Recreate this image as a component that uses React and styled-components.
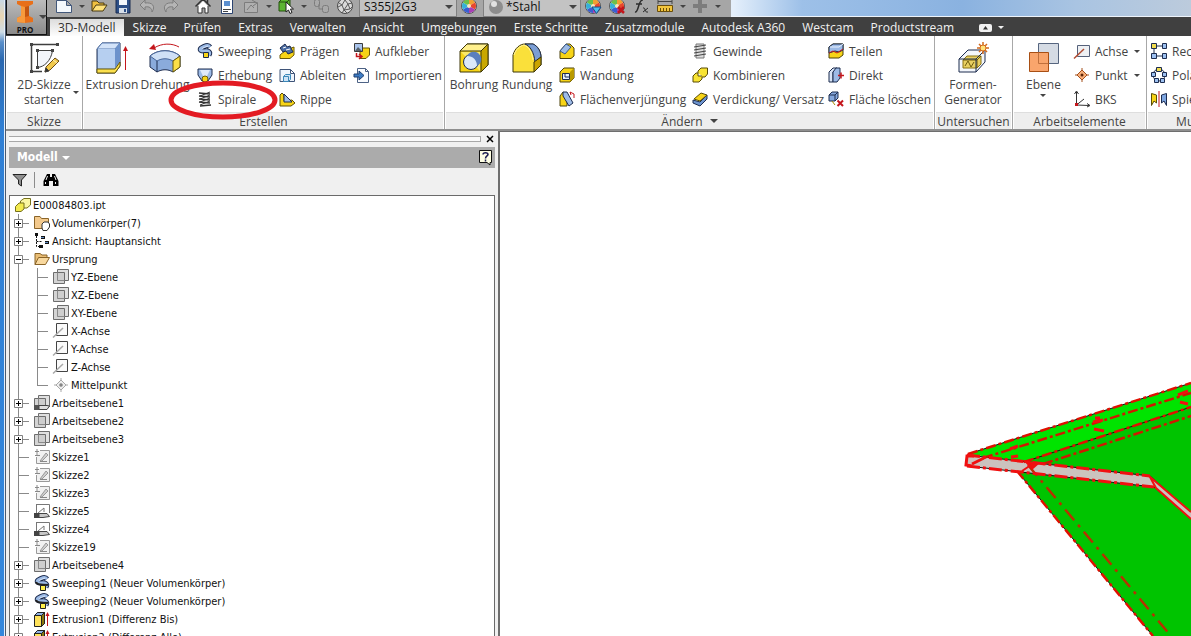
import React from 'react';
import styled, { createGlobalStyle } from 'styled-components';

const GlobalStyle = createGlobalStyle`
    * { box-sizing: border-box; }
    body { margin: 0; overflow: hidden; }
    button, select {
        margin: 0;
        padding: 0;
        border: 0;
        background: none;
        color: inherit;
        font: inherit;
    }
    ul { margin: 0; padding: 0; list-style: none; }
    svg { display: block; flex: none; }
`;

/* ---------- icons ---------- */

const N = '#1d2c4f';
const Y = '#f7d417';
const B = '#9dbbe6';
const R = '#c4161c';

const pipe = 'M13 4 C11 1 7 3 4 5 C2 7 4 8 7 8 C11 7 14 9 12 12';

const sweepPath = (
    <g strokeLinejoin='round'>
        <path d={pipe} fill='none' stroke={N} strokeWidth='5' />
        <path d={pipe} fill='none' stroke={B} strokeWidth='3' />
        <path d='M5 6 C5 5 9 4 11 3' fill='none' stroke='#e2edfb' />
        <path d='M6.500 9.500 H11.500 V14.500 H6.500 Z' fill={Y} stroke={N} />
    </g>
);

const planes = (
    <g stroke='#6d6d6d'>
        <path d='M4.500 .5 H15.500 V11.500 H4.500 Z' fill='#e0e0e0' />
        <path d='M.5 3.500 H11.500 V14.500 H.5 Z' fill='#c9c9c9' fillOpacity='.8' />
        <path d='M4.500 3.500 V11.500 H11.500' fill='none' stroke='#8a8a8a' />
    </g>
);

const wheel = (
    <g>
        <circle cx='8' cy='8' r='7.5' fill='#eee' stroke='#555' />
        <path d='M8 8 L8 1 A7 7 0 0 1 14 4.5 Z' fill='#f0a030' />
        <path d='M8 8 L14 4.5 A7 7 0 0 1 14 11.5 Z' fill='#e8482c' />
        <path d='M8 8 L14 11.5 A7 7 0 0 1 8 15 Z' fill='#a83fb5' />
        <path d='M8 8 L8 15 A7 7 0 0 1 2 11.5 Z' fill='#3a5fd0' />
        <path d='M8 8 L2 11.5 A7 7 0 0 1 2 4.5 Z' fill='#35b0d8' />
        <path d='M8 8 L2 4.5 A7 7 0 0 1 8 1 Z' fill='#6cc04a' />
        <circle cx='8' cy='8' r='2' fill='#f7e9c0' />
    </g>
);

const icons = {
    newFile: <path d='M.5 2.5 H10.5 L15.5 7.5 V14.5 H.5 Z M10.5 2.5 V7.5 H15.5' fill='#f4f8fc' stroke='#41577a' />,
    open: (
        <g strokeLinejoin='round'>
            <path d='M1 13 V3 H6 L8 5 H13 V8' fill='#f0c040' stroke='#4a3a10' />
            <path d='M1 13 L5 7 H16 L12 13 Z' fill='#ffe27a' stroke='#4a3a10' />
        </g>
    ),
    save: (
        <g>
            <path d='M1 1 H15 V15 H1 Z' fill='#2d4f86' stroke='#1a2c50' />
            <path d='M4 0 H12 V7 H4 Z' fill='#f3f6fa' />
            <path d='M4 10 H12 V15 H4 Z' fill='#d7dfea' />
            <path d='M9 11 H11 V14 H9 Z' fill='#2d4f86' />
        </g>
    ),
    undo: <path d='M6 2 L1 7 L6 12 V9 C10 8 13 10 13 14 C17 8 13 4 6 5 Z' fill='#b5b5b5' stroke='#7d7d7d' />,
    redo: <path d='M10 2 L15 7 L10 12 V9 C6 8 3 10 3 14 C-1 8 3 4 10 5 Z' fill='#b5b5b5' stroke='#7d7d7d' />,
    home: (
        <g>
            <path d='M3 8 V15 H7 V10 H10 V15 H13 V8' fill='#fff' stroke='#333' />
            <path d='M3 8 L8 3 L13 8 Z' fill='#fff' />
            <path d='M.5 8.5 L8 1 L15.5 8.5 M12.500 5 V1' fill='none' stroke='#333' strokeWidth='1.500' />
        </g>
    ),
    doc: (
        <g>
            <path d='M2.5 .5 H13.5 V15.5 H2.5 Z' fill='#fff' stroke='#2c4470' />
            <path d='M5 3 H11 V8 H5 Z' fill='#5b8fd0' />
            <path d='M4 11.5 H12 M4 13.5 H9' stroke='#444' />
        </g>
    ),
    update: (
        <g fill='#b0b0b0' stroke='#7c7c7c'>
            <path d='M1.5 4.5 H14.5 V14.5 H1.5 Z' />
            <path d='M4 12 L8 7 L11 10 M9 2 L14 5 L10 8' fill='none' />
        </g>
    ),
    select: (
        <g>
            <path d='M1 4 L4 1 H12 V10 L9 13 H1 Z' fill='#5cb531' stroke='#24520f' />
            <path d='M1 4 H9 V13 M9 4 L12 1' fill='none' stroke='#24520f' />
            <path d='M8 4 V14 L10.500 12 L12 15.500 L14 14.500 L12.500 11 H15.500 Z' fill='#fff' stroke='#222' />
        </g>
    ),
    chain: (
        <g fill='#a9a9a9' stroke='#7b7b7b'>
            <rect x='1.5' y='1.500' width='5' height='7' rx='2' />
            <rect x='9.500' y='7.500' width='6' height='7' rx='2' />
            <path d='M6 6 V11 H10' fill='none' />
        </g>
    ),
    sphere: (
        <g>
            <circle cx='8' cy='8' r='7.500' fill='#d9d9d9' stroke='#4a4a4a' />
            <path d='M2 5 L5 7 L8 2 L11 6 L15 5 M1 9 L5 7 L7 12 L11 6 L13 11 L7 12 L5 15 M13 11 L15 9 M7 12 L10 15' fill='none' stroke='#5a5a5a' />
        </g>
    ),
    wheel,
    wheelDown: <g>{wheel}<path d='M7 9 H16 L11.500 15.500 Z' fill='#4ac0ee' stroke='#1a4c86' /></g>,
    wheelOff: <g>{wheel}<path d='M9 9 L15 15 M15 9 L9 15' stroke={R} strokeWidth='2.500' /></g>,
    fx: (
        <g fill='none' stroke='#2b2b2b' strokeWidth='1.500'>
            <path d='M2 14 C6 15 5 1 10 2 M3 6 H9' />
            <path d='M10 10 C13 9 11 15 15 14 M15 10 L10 14' strokeWidth='1' />
        </g>
    ),
    ruler: (
        <g>
            <path d='M1 3.500 H15 M1 1 V6 M15 1 V6' stroke='#444' fill='none' />
            <path d='M.5 7.500 H15.500 V13.500 H.5 Z' fill='#f2c53d' stroke='#6b4e0a' />
            <path d='M3.500 10 V13 M6.500 10 V13 M9.500 10 V13 M12.500 10 V13' stroke='#6b4e0a' />
        </g>
    ),
    plus: <path d='M6 1 H10 V6 H15 V10 H10 V15 H6 V10 H1 V6 H6 Z' fill='#7d7d7d' />,
    ball: (
        <g>
            <circle cx='8' cy='8' r='7' fill='#8d8d8d' />
            <circle cx='6' cy='5' r='3' fill='#e2e2e2' />
        </g>
    ),
    sketch: (
        <g fill='none' stroke='#3f3f3f'>
            <path d='M3.500 2.500 H29.500 M3.500 2.500 V29.500 H14' strokeWidth='1.500' />
            <path d='M9.500 8.500 V25.500 C16 25 23 19 24.500 8.500 Z' fill='#f2f5fa' />
            <path d='M2 1 H5 V4 H2 Z M28 1 H31 V4 H28 Z M2 28 H5 V31 H2 Z M8 7 H11 V10 H8 Z M23 7 H26 V10 H23 Z M8 24 H11 V27 H8 Z' fill='#444' stroke='none' />
            <path d='M17 30 L18 25 L27 16 L31 19 L22 28 Z' fill='#f1c94b' stroke='#6c4b12' />
            <path d='M25 18 L29 21' stroke='#fff2bb' />
            <path d='M17 30 L18 26 L21 29 Z' fill='#333' />
        </g>
    ),
    extrusion: (
        <g strokeLinejoin='round'>
            <path d='M1 7 L6 1 H24 V24 L19 31 H1 Z' fill={B} stroke={N} />
            <path d='M1 7 L6 1 H24 L19 7 Z' fill='#d3e3f8' stroke='#5c7fb4' />
            <path d='M2 7 H19 V26 H2 Z' fill='#b6cff0' />
            <path d='M19 7 L24 1 V20 L19 26 Z' fill='#6c92cb' />
            <path d='M1 27 H19 L24 20 V24 L19 31 H1 Z' fill='#fbe04e' stroke='#6b5a08' />
            <path d='M29.500 28 V7' stroke={R} />
            <path d='M27 9 L29.500 4 L32 9 Z' fill={R} />
        </g>
    ),
    revolve: (
        <g strokeLinejoin='round'>
            <path d='M1 14 C9 7 23 7 31 14 V25 L24 30 C19 27 13 27 8 30 L1 25 Z' fill='#8aabdc' stroke={N} />
            <path d='M1 14 C9 7 23 7 31 14 L24 19 C19 16 13 16 8 19 Z' fill='#cfe0f6' stroke='#46659a' />
            <path d='M24 19 L31 14 V25 L24 30 Z' fill='#fbdf48' stroke='#6b5a08' />
            <path d='M8 19 V30' stroke={N} />
            <path d='M5 6 C13 1 23 1 30 5' fill='none' stroke={R} />
            <path d='M0 7 L5 2 L7 8 Z' fill={R} />
        </g>
    ),
    sweep: sweepPath,
    loft: (
        <g strokeLinejoin='round'>
            <path d='M1 2 H15 V8 L11 14 H5 L1 8 Z' fill={B} stroke={N} />
            <path d='M3 3 H13 L10 9 H6 Z' fill='#dfeafa' />
            <circle cx='8' cy='12' r='3' fill={Y} stroke='#6b5a08' />
        </g>
    ),
    coil: (
        <g fill='none' stroke='#333' strokeWidth='1.500'>
            <path d='M2 2 L13 3 M2 5 L13 6 M2 8 L13 9 M2 11 L13 12 M3 15 L14 14' />
            <path d='M13 1 L3 5 M13 4 L3 8 M13 7 L3 11 M13 10 L3 14' strokeWidth='1' />
        </g>
    ),
    emboss: (
        <g>
            <path d='M1 12 L7 7 L15 4 V12 L11 15.500 H1 Z' fill={Y} stroke='#6b5a08' />
            <path d='M1 5 L6 1 L8 4 L11 3 L14 9 L9 11 L7 8 L4 9 Z' fill='#4b6da4' stroke={N} />
            <path d='M4 5 L7 4 M7 7 L11 6' stroke='#fff' />
        </g>
    ),
    derive: (
        <g>
            <path d='M1 2.500 H11.500 L15.500 6.500 V14.500 H1 Z M11.500 2.500 V6.500 H15.500' fill='#eef4fc' stroke='#3f5478' />
            <path d='M4.500 9.500 L6.500 7.500 H11.500 V12.500 L9.500 14.500 H4.500 Z M4.500 9.500 H9.500 V14.500' fill='#cfe2f5' stroke='#3b88b8' />
        </g>
    ),
    rib: (
        <g strokeLinejoin='round'>
            <path d='M1 4 L3 2 L5 4 V10 L13 9 L16 12 L12 15 H1 Z' fill={Y} stroke='#5d4e08' />
            <path d='M5 3 L13 11 H5 Z' fill={B} stroke={N} />
        </g>
    ),
    decal: (
        <g>
            <path d='M6 8 L9 5 H15.500 V12 L12 15.500 H6 Z' fill={Y} stroke='#6b5a08' />
            <path d='M.5 .5 H8.500 V8.500 H.5 Z' fill='#a9c4ec' stroke='#3c3c3c' />
            <path d='M1 8 L4 4 L8 8 Z' fill='#54616a' />
            <path d='M2.500 10 V13.500 H7 M5 11 L8 13.500 L5 16' fill='none' stroke={R} strokeWidth='1.500' />
        </g>
    ),
    importFile: (
        <g>
            <path d='M3.500 1.500 H11.500 L14.500 4.500 V15.500 H3.500 Z M11.500 1.500 V4.500 H14.500' fill='#fafcff' stroke='#4d6285' />
            <path d='M0 7 H5 V4 L10 8.500 L5 13 V10 H0 Z' fill='#3d7cc4' stroke='#1d3f70' />
        </g>
    ),
    hole: (
        <g strokeLinejoin='round'>
            <path d='M2 9 L9 2 H30 V23 L23 30 H2 Z' fill={Y} stroke='#3d3608' />
            <path d='M2 9 L9 2 H30 L23 9 Z' fill='#fff08c' stroke='#3d3608' />
            <path d='M3 10 H22 V29 Z' fill='#fbe96a' />
            <path d='M23 9 L30 2 V23 L23 30 Z' fill='#c9a800' stroke='#3d3608' />
            <circle cx='13' cy='20' r='7.500' fill='#dbe8fa' stroke={N} />
            <path d='M9 14 A7.500 7.500 0 1 1 19 24 C19 18 15 14 9 14 Z' fill='#5b7fbd' />
        </g>
    ),
    fillet: (
        <g strokeLinejoin='round'>
            <path d='M2 30 V13 C4 6 9 2 14 2 H22 C27 4 30 10 30 15 V23 L23 30 Z' fill='#fae03a' stroke='#3d3608' />
            <path d='M14 2 H22 C27 4 30 10 30 15 L24 20 C23 10 19 4 14 2 Z' fill='#7b9ed4' stroke={N} />
            <path d='M23 20 L30 15 V23 L23 30 Z' fill='#caa400' stroke='#3d3608' />
            <path d='M3 13 C5 7 9 4 13 3 C18 5 21 10 22 18' fill='none' stroke='#fff3a0' />
        </g>
    ),
    chamfer: (
        <g strokeLinejoin='round'>
            <path d='M1 8 L7 1 H11 L15 5 V13 L12 15.500 H1 Z' fill={Y} stroke='#4d420a' />
            <path d='M1 8 L7 1 L12 4 L6 11 Z' fill={B} stroke='#37588f' />
        </g>
    ),
    shell: (
        <g strokeLinejoin='round'>
            <path d='M1 5 L5 1 H15 V11 L11 15 H1 Z' fill={Y} stroke='#4d420a' />
            <path d='M11 5 L15 1 V11 L11 15 Z' fill='#b99a00' />
            <path d='M3.500 6.500 H10.500 V12.500 H3.500 Z' fill='#e4f0ff' stroke={N} />
            <path d='M6 7 V10 H10' fill='none' stroke={N} />
        </g>
    ),
    draft: (
        <g strokeLinejoin='round'>
            <path d='M1 15 V5 L4 1 L8 4 V15 Z' fill={Y} stroke='#4d420a' />
            <path d='M4 1 H8 L14 12 L10 15 L4 5 Z' fill={B} stroke={N} />
            <path d='M11 1 L15 3 L15 7 M11 1 L12 4' fill='none' stroke={R} />
        </g>
    ),
    thread: (
        <g>
            <path d='M4 1 H12 V15 H4 Z' fill='#dcdcdc' stroke='#777' />
            <path d='M2 4 L14 2 M2 7 L14 5 M2 10 L14 8 M2 13 L14 11' stroke='#444' />
        </g>
    ),
    combine: <path d='M1 9 L4 6 H6 V4 L9 1 H15.500 V7 L13 10 H10 V12 L7 15 H1 Z M6 6 V9 H10' fill='#f8e433' stroke='#5a4d06' />,
    thicken: (
        <g strokeLinejoin='round'>
            <path d='M1 9 L8 11 L15 4 V8 L8 15 L1 12 Z' fill='#6d94ce' stroke={N} />
            <path d='M2 8 L9 2 L15 4 L8 10 Z' fill={Y} stroke='#5a4d06' />
        </g>
    ),
    split: (
        <g strokeLinejoin='round'>
            <path d='M1 4 L5 1 H15 V12 L11 15 H1 Z' fill={Y} stroke='#4d420a' />
            <path d='M1 4 L5 1 H15 V7 L11 9 L7 8 L1 10 Z' fill={B} stroke={N} />
            <path d='M1 10 L5 8 L9 10 L15 6' fill='none' stroke={R} />
            <path d='M2 4 H11 L15 1' fill='none' stroke='#e9f2ff' />
        </g>
    ),
    direct: (
        <g strokeLinejoin='round'>
            <path d='M1 5 L5 1 H9 L5 5 V15 H1 Z' fill='#d9e5f6' stroke={N} />
            <path d='M5 5 L8 1 H12 V11 L9 15 H5 Z' fill={B} stroke={N} />
            <path d='M10 8.500 H16 M13 5.500 V11.500' stroke={R} strokeWidth='1.500' />
        </g>
    ),
    deleteFace: (
        <g strokeLinejoin='round'>
            <path d='M1 4 L4 1 H10 V7 L7 10 H1 Z' fill='#86a8dd' stroke={N} />
            <path d='M1 4 H7 V10 M7 4 L10 1' fill='none' stroke={N} />
            <path d='M4 10 L7 14' stroke='#a58a00' />
            <path d='M9.500 9.500 L15 15 M15 9.500 L9.500 15' stroke={R} strokeWidth='2' />
        </g>
    ),
    shapeGen: (
        <g strokeLinejoin='round'>
            <path d='M2 17 L11 8 H28 V20 L19 30 H2 Z' fill='#f3f6fb' stroke={N} />
            <path d='M6 18 L10 14 H24 V22 L20 26 H6 Z' fill='#e8cf62' stroke='#8a7212' />
            <path d='M6 18 H20 V26 M20 18 L24 14 M8 24 L11 19 L14 25 L17 20' fill='none' stroke='#6e5b0d' />
            <path d='M2 17 H19 V30 M19 17 L28 8' fill='none' stroke={N} />
            <path d='M26 0 V12 M20 6 H32 M22 2 L30 10 M30 2 L22 10' stroke='#d2691e' strokeWidth='1.500' />
            <circle cx='26' cy='6' r='3' fill='#ffe27a' stroke='#d2691e' />
        </g>
    ),
    plane: (
        <g>
            <path d='M10.500 1.500 H30.500 V21.500 H10.500 Z' fill='#d5dbe4' stroke='#56657f' />
            <path d='M1.500 10.500 H20.500 V29.500 H1.500 Z' fill='#f9a56c' stroke='#a84f14' />
            <path d='M10.500 10.500 V21.500 H20.500' fill='none' stroke='#c0703c' />
        </g>
    ),
    axis: (
        <g>
            <path d='M3.500 2.500 H15.500 V13.500 H3.500 Z' fill='#eef0f3' stroke='#55617a' />
            <path d='M0 15.500 L10 6' stroke='#b04a30' strokeWidth='1.500' />
        </g>
    ),
    point: (
        <g>
            <path d='M8 1 V15 M1 8 H15' stroke='#a4501c' />
            <path d='M8 3 L13 8 L8 13 L3 8 Z' fill='#f9b07a' stroke='#a4501c' />
            <circle cx='8' cy='8' r='1.500' fill='#5e2506' />
        </g>
    ),
    ucs: (
        <g>
            <path d='M2.500 1 V14 L15 14.500 M2.500 14 L10 8' fill='none' stroke='#333' />
            <path d='M.5 3 L2.500 0 L4.500 3 M13 12.500 L16 14.500 L13 16' fill='none' stroke='#333' />
            <path d='M1 12 H4 V15 H1 Z' fill={R} />
        </g>
    ),
    rectPattern: (
        <g fill='#9cc0f0' stroke={N}>
            <path d='M3 3 H13 M3 3 V13 H13' fill='none' />
            <path d='M.5 .5 H5.500 V5.500 H.5 Z' fill='#f0dc50' />
            <path d='M11.500 .5 H15.500 V5.500 H11.500 Z M.5 10.500 H5.500 V15.500 H.5 Z M11.500 10.500 H15.500 V15.500 H11.500 Z' />
        </g>
    ),
    polarPattern: (
        <g fill='#9cc0f0' stroke={N}>
            <circle cx='8' cy='8' r='6' fill='none' />
            <path d='M5.500 .5 H10.500 V4.500 H5.500 Z' fill='#f0dc50' />
            <path d='M.5 5.500 H4.500 V9.500 H.5 Z M11.500 5.500 H15.500 V9.500 H11.500 Z M3.500 11.500 H7.500 V15.500 H3.500 Z M9.500 11.500 H13.500 V15.500 H9.500 Z' />
        </g>
    ),
    mirror: (
        <g>
            <path d='M.5 2.500 L5.500 4 V12 L3 10 L.5 14.500 Z' fill={Y} stroke='#5a4d06' />
            <path d='M15.500 2.500 L10.500 4 V12 L13 10 L15.500 14.500 Z' fill='#7ea6e0' stroke={N} />
            <path d='M8 0 V16' stroke={R} />
        </g>
    ),
    funnel: <path d='M1 2.500 H14.500 L9.500 8 V14 L6.500 12 V8 Z' fill='#909090' stroke='#222' />,
    binoculars: (
        <g>
            <path d='M4 2 H7 V5 H9 V2 H12 L15.500 9 V14 H10 V9 H6 V14 H.5 V9 Z' fill='#000' />
            <path d='M4.500 4 L3 8 M11.500 4 L13 8 M2.500 10 V12 M12.500 10 V12' stroke='#efefef' />
        </g>
    ),
    part: (
        <g>
            <path d='M5.500 4 L9 1.500 H15.500 V8 L12 11 H5.500 Z' fill='#fbf6a2' stroke='#77711c' />
            <path d='M.5 9.500 L4 6 H9 V12 L6 14.500 H.5 Z' fill='#f3ea4e' stroke='#77711c' />
        </g>
    ),
    solids: (
        <g>
            <path d='M.5 13.500 V1.500 H6 L7.500 3.500 H14.500 V13.500 Z' fill='#f3c98c' stroke='#8a6428' />
            <path d='M8 13 V9 L10 7 H14 L15.500 9 V12 L13 15.500 H9 Z' fill='#fff' stroke='#333' />
        </g>
    ),
    view: (
        <g fill='none' stroke='#111'>
            <path d='M2.500 3 V13.500 H6 M2.500 8.500 H8' strokeDasharray='2 1' />
            <path d='M1 1.500 H4 M7 4.500 H11 M11 9.500 H15 M5 13.500 H9' strokeWidth='3' />
            <path d='M7 4.500 H10 M11 9.500 H14' stroke='#5f8ac2' />
        </g>
    ),
    folder: (
        <g strokeLinejoin='round'>
            <path d='M1 13.500 V2.500 H6 L8 4 H13 V7' fill='#e9bd74' stroke='#8a6428' />
            <path d='M1 13.500 L4.500 6.500 H15.500 L11.500 13.500 Z' fill='#f8d89e' stroke='#8a6428' />
        </g>
    ),
    planes,
    planesHand: (
        <g>
            {planes}
            <path d='M0 10 H5 V15 H0 Z' fill='#555' />
            <path d='M5 10.500 H13 L15.500 11 L13 14.500 H5 Z' fill='#e0e0e0' stroke='#444' />
        </g>
    ),
    axisGray: (
        <g>
            <path d='M3.500 .5 H14.500 V12.500 H3.500 Z' fill='#fafafa' stroke='#444' />
            <path d='M0 14.500 L10 5' stroke='#a8a8a8' strokeWidth='1.500' />
        </g>
    ),
    pointGray: (
        <g fill='none' stroke='#a8a8a8'>
            <path d='M8 1 V15 M1 8 H15' />
            <path d='M8 3 L13 8 L8 13 L3 8 Z' fill='#eee' />
            <circle cx='8' cy='8' r='1.500' fill='#777' />
        </g>
    ),
    sketchGray: (
        <g fill='none' stroke='#9a9a9a'>
            <path d='M6 1.500 H15.500 V14.500 H2.500 V8' fill='#f1f1f1' />
            <path d='M6 12 L12 4 L14 6 L8 12 Z' fill='#cfcfcf' />
            <path d='M1 2.500 H5 M3 0 V7 M1 6.500 H6 M6 12.500 H13' stroke='#888' />
        </g>
    ),
    sketchHand: (
        <g fill='none' stroke='#777'>
            <path d='M2.500 1 V12 M2.500 1.500 H15.500 V10 M4 10 L10 5 V9' />
            <path d='M0 10 H5 V15 H0 Z' fill='#444' stroke='none' />
            <path d='M5 10.500 H13 L15.500 13.500 L9 14.500 H5 Z' fill='#c8c8c8' stroke='#444' />
        </g>
    ),
    sweepTree: (
        <g>
            {sweepPath}
            <path d='M2 7 C3 11 10 9 14 10' fill='none' stroke='#222' strokeWidth='2' />
            <path d='M6.500 10.500 H11.500 V15.500 H6.500 Z' fill='#fff04a' stroke='#222' />
        </g>
    ),
    extrudeTree: (
        <g>
            <path d='M.5 4.500 L3.500 1.500 H10.500 V12.500 L7.500 15.500 H.5 Z' fill='#ffe25a' stroke='#222' />
            <path d='M7.500 4.500 L10.500 1.500 V12.500 L7.500 15.500 Z' fill='#8a7710' stroke='#222' />
            <path d='M.5 4.500 L3.500 1.500 H10.500 L7.500 4.500 Z' fill='#8fb0e0' stroke='#222' />
            <path d='M13.500 15 V4' stroke={R} />
            <path d='M11.500 5 L13.500 1 L15.500 5 Z' fill={R} />
        </g>
    )
};

const Icon = ({ name, size = 16 }) => (
    <svg width={size} height={size} viewBox={`0 0 ${size} ${size}`} overflow='visible' aria-hidden='true'>
        {icons[name]}
    </svg>
);

const Caret = styled.span`
    flex: none;
    width: 0;
    height: 0;
    border: ${props => props.$size || 3}px solid transparent;
    border-top-color: ${props => props.$color || '#444'};
    border-bottom-width: 0;
`;

/* ---------- window frame ---------- */

const Desktop = styled.div`
    display: flex;
    height: 100vh;
    overflow: hidden;
    font-family: 'Open Sans', 'Noto Sans', sans-serif;
    font-size: 12px;
    line-height: 15px;
    color: #444;
`;

const Wallpaper = styled.div`
    flex: none;
    width: 6px;
    border-right: 1px solid #4a5a70;
    box-shadow: inset -1px 0 #e4eefa;
    background: linear-gradient(#c9d8e4 0, #e8d6b4 16px, #cfdde6 32px, #5a8fca 42px, #2a68b0 60px, #2f7fd4 130px, #3487dc 100%);
`;

const Frame = styled.div`
    flex: 1;
    min-width: 0;
    display: flex;
    flex-direction: column;
    background: #f0f0f0;
`;

const Header = styled.header`
    display: flex;
    background: #404040;
`;

const AppButton = styled.button`
    flex: none;
    display: grid;
    grid-template-columns: 28px 8px;
    align-items: center;
    width: 41px;
    height: 35px;
    padding: 0 2px 0 4px;
    border: 1px solid #111;
    border-top: 0;
    background: linear-gradient(#bcbcbc, #8a8a8a);
    color: #111;
    font-size: 8px;
    font-weight: 700;
    line-height: 9px;
    text-align: center;
`;

const AppLogo = styled.span`
    display: flex;
    flex-direction: column;
    align-items: center;
    gap: 2px;
`;

const HeaderRows = styled.div`
    flex: 1;
    min-width: 0;
`;

const TitleBar = styled.div`
    display: flex;
    height: 17px;
    border-bottom: 1px solid #eef4fb;
    background: linear-gradient(90deg, #e4effb 0, #e4effb 60%, #9dc0e8 66%, #8ab2e0 80%, #a9c4e2 90%, #bccbdc 100%);
`;

const QuickAccess = styled.div`
    display: flex;
    align-items: flex-end;
    padding: 0 8px 0 5px;
    background: #a6a6a6;
    height: 17px;
`;

const QuickButton = styled.button`
    flex: none;
    display: flex;
    justify-content: center;
    width: 24px;
    height: 19px;
`;

const QuickArrow = styled.button`
    flex: none;
    display: flex;
    align-items: center;
    justify-content: center;
    width: 11px;
    height: 17px;
    padding-bottom: 4px;
`;

const QuickGap = styled.span`
    width: 8px;
`;

const Combo = styled.span`
    flex: none;
    display: flex;
    align-items: center;
    gap: 2px;
    width: 98px;
    height: 17px;
    margin-left: 2px;
    padding: 0 3px 3px 4px;
    border: 1px solid #808080;
    border-top: 0;
    background: #c3c3c3;
    color: #111;

    select {
        flex: 1;
        min-width: 0;
        height: 15px;
        appearance: none;
        outline: 0;
    }
`;

const TabBar = styled.nav`
    display: flex;
    align-items: flex-end;
    gap: 1px;
    height: 19px;
    padding-left: 3px;
`;

const Tab = styled.button`
    flex: none;
    height: 17px;
    padding: 0 8px;
    color: ${props => props.$active ? '#333' : '#f2f2f2'};
    background: ${props => props.$active ? 'linear-gradient(#dcdcdc, #fdfdfd)' : 'none'};
    white-space: nowrap;
`;

const Minimize = styled.button`
    display: flex;
    align-items: center;
    gap: 6px;
    height: 17px;
    margin-left: 16px;
`;

/* ---------- ribbon ---------- */

const Ribbon = styled.div`
    display: flex;
    height: 95px;
    flex: none;
    overflow: hidden;
    border-bottom: 2px solid #8f8f8f;
    background: #fff;
`;

const Panel = styled.section`
    flex: none;
    display: flex;
    flex-direction: column;
    min-width: ${props => props.$width}px;
    border-right: 1px solid #a8a8a8;
`;

const PanelBody = styled.div`
    flex: 1;
    display: flex;
    align-items: flex-start;
    padding: 3px 4px 0;
`;

const PanelTitle = styled.h2`
    display: flex;
    align-items: center;
    justify-content: center;
    gap: 7px;
    height: 17px;
    margin: 0 1px;
    border-top: 1px solid #dedede;
    background: #eeeeee;
    font-size: 12px;
    font-weight: 400;
`;

const BigButton = styled.button`
    flex: none;
    display: flex;
    flex-direction: column;
    align-items: center;
    gap: 3px;
    width: ${props => props.$width}px;
    padding-top: 3px;
`;

const BigLabel = styled.span`
    display: flex;
    flex-direction: ${props => props.$menu === 'below' ? 'column' : 'row'};
    align-items: center;
    gap: 2px;
    padding-left: ${props => props.$menu === 'side' ? 8 : 0}px;
    white-space: pre;
`;

const Column = styled.div`
    flex: none;
    width: ${props => props.$width}px;

    ${BigButton} + & {
        margin-left: 4px;
    }
`;

const SmallButton = styled.button`
    position: relative;
    display: flex;
    align-items: center;
    gap: 5px;
    width: 100%;
    height: 24px;
    white-space: nowrap;

    ${Caret} {
        margin-left: auto;
    }
`;

const Marker = styled.svg`
    position: absolute;
    left: -32px;
    top: -10px;
    z-index: 2;
    pointer-events: none;
`;

/* ---------- model browser ---------- */

const Workspace = styled.main`
    flex: 1;
    min-height: 0;
    display: flex;
`;

const Browser = styled.aside`
    flex: none;
    display: flex;
    flex-direction: column;
    width: 494px;
    padding: 0 3px;
    border-right: 2px solid #6e6e6e;
    font-family: 'DejaVu Sans Condensed', 'DejaVu Sans', sans-serif;
    font-size: 11px;
    color: #111;
`;

const Grip = styled.div`
    flex: none;
    display: flex;
    align-items: center;
    gap: 4px;
    height: 16px;

    &::before {
        content: '';
        flex: 1;
        height: 4px;
        border: 1px solid #a8a8a8;
        border-left: 0;
        background: #fafafa;
    }
`;

const BrowserHead = styled.div`
    flex: none;
    display: flex;
    align-items: center;
    justify-content: space-between;
    height: 21px;
    padding: 0 2px 0 8px;
    background: #ababab;
`;

const BrowserTitle = styled.button`
    display: flex;
    align-items: center;
    gap: 4px;
    color: #fff;
    font-size: 12px;
    font-weight: 700;
`;

const BrowserTools = styled.div`
    flex: none;
    display: flex;
    align-items: center;
    gap: 6px;
    height: 27px;
    padding: 0 3px 3px;

    button + button {
        padding-left: 8px;
        border-left: 1px solid #8c8c8c;
    }
`;

const TreeBox = styled.div`
    flex: 1;
    min-height: 0;
    overflow: hidden;
    border: 1px solid #6a6a6a;
    border-bottom: 0;
    background: #fff;
`;

const Branch = styled.ul`
    && { padding-left: ${props => props.$indent}px; }
`;

const Node = styled.li`
    background: linear-gradient(#8a8a8a, #8a8a8a) 4px 0 / 1px 100% no-repeat;

    &:last-child {
        background-size: 1px 9px;
    }
`;

const Row = styled.div`
    display: flex;
    align-items: center;
    gap: 2px;
    height: 18px;
    padding-left: ${props => props.$root ? 5 : 0}px;
    white-space: nowrap;
`;

const NodeLabel = styled.span`
    padding-top: 2px;
    line-height: 16px;
`;

const Joint = styled.span`
    display: flex;
    align-items: center;
    width: 18px;
    padding: 0 3px 0 ${props => props.$leaf ? 4 : 0}px;

    &::after {
        content: '';
        flex: 1;
        height: 1px;
        background: #8a8a8a;
    }
`;

const Toggle = styled.button`
    width: 9px;
    height: 9px;
    background: #fff;
`;

const Canvas = styled.div`
    flex: 1;
    min-width: 0;
    border-top: 1px solid #6e6e6e;
    background: #fff;

    svg {
        width: 100%;
        height: 100%;
    }
`;

const tabs = ['3D-Modell', 'Skizze', 'Prüfen', 'Extras', 'Verwalten', 'Ansicht', 'Umgebungen', 'Erste Schritte',
    'Zusatzmodule', 'Autodesk A360', 'Westcam', 'Productstream'];

const createTools = [
    { width: 82, items: [['sweep', 'Sweeping'], ['loft', 'Erhebung'], ['coil', 'Spirale']] },
    { width: 75, items: [['emboss', 'Prägen'], ['derive', 'Ableiten'], ['rib', 'Rippe']] },
    { width: 86, items: [['decal', 'Aufkleber'], ['importFile', 'Importieren']] }
];

const modifyTools = [
    { width: 133, items: [['chamfer', 'Fasen'], ['shell', 'Wandung'], ['draft', 'Flächenverjüngung']] },
    { width: 136, items: [['thread', 'Gewinde'], ['combine', 'Kombinieren'], ['thicken', 'Verdickung/ Versatz']] },
    { width: 102, items: [['split', 'Teilen'], ['direct', 'Direkt'], ['deleteFace', 'Fläche löschen']] }
];

const workTools = [
    { width: 66, items: [['axis', 'Achse', true], ['point', 'Punkt', true], ['ucs', 'BKS']] }
];

const patternTools = [
    { width: 90, items: [['rectPattern', 'Rechteckig'], ['polarPattern', 'Polar'], ['mirror', 'Spiegeln']] }
];

const tree = [
    { icon: 'solids', label: 'Volumenkörper(7)', closed: true },
    { icon: 'view', label: 'Ansicht: Hauptansicht', closed: true },
    {
        icon: 'folder', label: 'Ursprung', children: [
            { icon: 'planes', label: 'YZ-Ebene' },
            { icon: 'planes', label: 'XZ-Ebene' },
            { icon: 'planes', label: 'XY-Ebene' },
            { icon: 'axisGray', label: 'X-Achse' },
            { icon: 'axisGray', label: 'Y-Achse' },
            { icon: 'axisGray', label: 'Z-Achse' },
            { icon: 'pointGray', label: 'Mittelpunkt' }
        ]
    },
    { icon: 'planesHand', label: 'Arbeitsebene1', closed: true },
    { icon: 'planes', label: 'Arbeitsebene2', closed: true },
    { icon: 'planes', label: 'Arbeitsebene3', closed: true },
    { icon: 'sketchGray', label: 'Skizze1' },
    { icon: 'sketchGray', label: 'Skizze2' },
    { icon: 'sketchGray', label: 'Skizze3' },
    { icon: 'sketchHand', label: 'Skizze5' },
    { icon: 'sketchHand', label: 'Skizze4' },
    { icon: 'sketchGray', label: 'Skizze19' },
    { icon: 'planes', label: 'Arbeitsebene4', closed: true },
    { icon: 'sweepTree', label: 'Sweeping1 (Neuer Volumenkörper)', closed: true },
    { icon: 'sweepTree', label: 'Sweeping2 (Neuer Volumenkörper)', closed: true },
    { icon: 'extrudeTree', label: 'Extrusion1 (Differenz Bis)', closed: true },
    { icon: 'extrudeTree', label: 'Extrusion2 (Differenz Alle)', closed: true }
];

const Quick = ({ icon, label }) => (
    <QuickButton aria-label={label}><Icon name={icon} /></QuickButton>
);

const More = ({ label }) => (
    <QuickArrow aria-label={label}><Caret /></QuickArrow>
);

const Tools = ({ columns }) => columns.map(column => (
    <Column key={column.items[0][1]} $width={column.width}>
        {column.items.map(([icon, label, menu]) => (
            <SmallButton key={label}>
                <Icon name={icon} />
                {label}
                {menu && <Caret />}
                {icon === 'coil' && (
                    <Marker width='116' height='46' aria-hidden='true'>
                        <ellipse cx='58' cy='23' rx='52' ry='17' fill='none' stroke='#e31b23' strokeWidth='5' />
                    </Marker>
                )}
            </SmallButton>
        ))}
    </Column>
));

const Big = ({ icon, width, children }) => (
    <BigButton $width={width}>
        <Icon name={icon} size={32} />
        {children}
    </BigButton>
);

const TreeNode = ({ node }) => {
    const leaf = !node.closed && !node.children;

    return (
        <Node>
            <Row>
                <Joint $leaf={leaf}>
                    {!leaf && (
                        <Toggle aria-label={node.label} aria-expanded={!node.closed}>
                            <svg width='9' height='9' fill='none'>
                                <path d='M.5 .5 H8.500 V8.500 H.5 Z' stroke='#808080' />
                                <path d={node.closed ? 'M2 4.500 H7 M4.500 2 V7' : 'M2 4.500 H7'} stroke='#000' />
                            </svg>
                        </Toggle>
                    )}
                </Joint>
                <Icon name={node.icon} />
                <NodeLabel>{node.label}</NodeLabel>
            </Row>
            {node.children && (
                <Branch $indent={19}>
                    {node.children.map(child => <TreeNode key={child.label} node={child} />)}
                </Branch>
            )}
        </Node>
    );
};

const Model = () => (
    <svg viewBox='500 132 691 504' preserveAspectRatio='xMaxYMin slice' role='img' aria-label='Bauteil'>
        <path d='M1023 461 L1191 407 V636 H1153 L1017 471 Z' fill='#00c400' />
        <path d='M968 454 L1191 383 V408 L1024 462 Z' fill='#00e400' />
        <path d='M967 455 L1150 476 L1191 512 V519 L1154 487 L967 466 Z' fill='#cbc3be' />
        <g fill='none' stroke='#111'>
            <path d='M968 454 L1191 383 M1024 462 L1191 407 M1017 471 L1153 636' />
            <path d='M967 455 L1150 476 L1191 512 M967 466 L1154 487 L1191 519' />
        </g>
        <g fill='none' stroke='#e01000' strokeWidth='2.500' strokeDasharray='10 3 3 3'>
            <path d='M968 454 L1191 383' />
            <path d='M983 458 L1191 393' stroke='#d01800' />
            <path d='M1024 462 L1191 407' />
            <path d='M1043 464 L1191 416' stroke='#d01800' />
            <path d='M1017 471 L1153 636' />
            <path d='M1028 465 L1171 636' stroke='#b83000' strokeDasharray='14 6 3 6' />
        </g>
        <g fill='none' stroke='#f01010' strokeWidth='3'>
            <path d='M967 455 L1150 476 M967 466 L1154 487' strokeDasharray='13 3 3 3' />
            <path d='M1149 476 L1191 512 M1150 477 L1156 488 L1191 519' strokeWidth='2' />
            <path d='M974 456 L967 456 L966 465 L972 466 M972 464 L984 458' />
            <path d='M1010 449 L1018 446 M1011 457 L1018 456 M1093 422 L1103 420 M1095 418 L1100 418 M1094 429 L1104 431 M1178 395 L1188 391 M1180 402 L1188 404' />
        </g>
        <path d='M1023 460 L1040 463 L1032 470 Z' fill='#f01010' />
        <path d='M1022 471 L1031 465' stroke='#f01010' strokeWidth='2' />
    </svg>
);

const App = () => (
    <Desktop>
        <GlobalStyle />
        <Wallpaper />
        <Frame>
            <Header>
                <AppButton aria-label='Anwendungsmenü PRO'>
                    <AppLogo>
                        <svg width='18' height='22' viewBox='0 0 18 22'>
                            <path d='M1 0 H17 V3 L13 5 V15 L17 17 V21 L9 22 L1 21 V17 L5 15 V5 L1 3 Z' fill='#e8701a' />
                            <path d='M5 5 L9 6 V22 L1 21 V17 L5 15 Z' fill='#f79a3c' />
                            <path d='M9 6 L13 5 V15 L9 16 Z' fill='#c4550f' />
                        </svg>
                        PRO
                    </AppLogo>
                    <Caret $size={4} />
                </AppButton>
                <HeaderRows>
                    <TitleBar>
                        <QuickAccess>
                            <Quick icon='newFile' label='Neu' />
                            <More label='Neu: Optionen' />
                            <Quick icon='open' label='Öffnen' />
                            <Quick icon='save' label='Speichern' />
                            <Quick icon='undo' label='Rückgängig' />
                            <Quick icon='redo' label='Wiederherstellen' />
                            <QuickGap />
                            <Quick icon='home' label='Startseite' />
                            <Quick icon='doc' label='Eigenschaften' />
                            <Quick icon='update' label='Aktualisieren' />
                            <More label='Aktualisieren: Optionen' />
                            <Quick icon='select' label='Auswählen' />
                            <More label='Auswählen: Optionen' />
                            <Quick icon='chain' label='Verknüpfung' />
                            <Quick icon='sphere' label='Material' />
                            <Combo>
                                <select aria-label='Material'><option>S355J2G3</option></select>
                                <Caret $size={4} />
                            </Combo>
                            <Quick icon='wheel' label='Darstellung' />
                            <Combo>
                                <Icon name='ball' />
                                <select aria-label='Darstellung'><option>*Stahl</option></select>
                                <Caret $size={4} />
                            </Combo>
                            <Quick icon='wheelDown' label='Anpassen' />
                            <Quick icon='wheelOff' label='Löschen' />
                            <Quick icon='fx' label='Parameter' />
                            <Quick icon='ruler' label='Messen' />
                            <More label='Messen: Optionen' />
                            <Quick icon='plus' label='Hinzufügen' />
                            <More label='Schnellzugriff anpassen' />
                        </QuickAccess>
                    </TitleBar>
                    <TabBar>
                        {tabs.map((tab, i) => <Tab key={tab} $active={i === 0}>{tab}</Tab>)}
                        <Minimize aria-label='Multifunktionsleiste minimieren'>
                            <svg width='13' height='8'>
                                <rect width='13' height='8' rx='2' fill='#f0f0f0' />
                                <path d='M4 5.500 L6.500 2 L9 5.500 Z' fill='#333' />
                            </svg>
                            <Caret $color='#f0f0f0' />
                        </Minimize>
                    </TabBar>
                </HeaderRows>
            </Header>

            <Ribbon>
                <Panel $width={77}>
                    <PanelBody>
                        <Big icon='sketch' width={68}>
                            <BigLabel $menu='side'>{'2D-Skizze\nstarten'}<Caret /></BigLabel>
                        </Big>
                    </PanelBody>
                    <PanelTitle>Skizze</PanelTitle>
                </Panel>
                <Panel $width={361}>
                    <PanelBody>
                        <Big icon='extrusion' width={50}><BigLabel>Extrusion</BigLabel></Big>
                        <Big icon='revolve' width={56}><BigLabel>Drehung</BigLabel></Big>
                        <Tools columns={createTools} />
                    </PanelBody>
                    <PanelTitle>Erstellen</PanelTitle>
                </Panel>
                <Panel $width={490}>
                    <PanelBody>
                        <Big icon='hole' width={50}><BigLabel>Bohrung</BigLabel></Big>
                        <Big icon='fillet' width={56}><BigLabel>Rundung</BigLabel></Big>
                        <Tools columns={modifyTools} />
                    </PanelBody>
                    <PanelTitle>Ändern <Caret $size={4} /></PanelTitle>
                </Panel>
                <Panel $width={78}>
                    <PanelBody>
                        <Big icon='shapeGen' width={68}><BigLabel>{'Formen-\nGenerator'}</BigLabel></Big>
                    </PanelBody>
                    <PanelTitle>Untersuchen</PanelTitle>
                </Panel>
                <Panel $width={134}>
                    <PanelBody>
                        <Big icon='plane' width={53}>
                            <BigLabel $menu='below'>Ebene<Caret /></BigLabel>
                        </Big>
                        <Tools columns={workTools} />
                    </PanelBody>
                    <PanelTitle>Arbeitselemente</PanelTitle>
                </Panel>
                <Panel $width={98}>
                    <PanelBody>
                        <Tools columns={patternTools} />
                    </PanelBody>
                    <PanelTitle>Muster</PanelTitle>
                </Panel>
            </Ribbon>

            <Workspace>
                <Browser>
                    <Grip>
                        <button aria-label='Schließen'>
                            <svg width='10' height='8'>
                                <path d='M2 1 L8 7 M8 1 L2 7' stroke='#000' strokeWidth='1.500' />
                            </svg>
                        </button>
                    </Grip>
                    <BrowserHead>
                        <BrowserTitle>Modell <Caret $size={4} $color='#fff' /></BrowserTitle>
                        <button aria-label='Hilfe'>
                            <svg width='15' height='17'>
                                <path d='M1.500 1.500 H13.500 V13.500 H12 V16 L9 13.500 H1.500 Z' fill='#ffffe4' stroke='#111' />
                                <path d='M5 5.500 C5 3 10 3 10 5.500 C10 7 7.500 7 7.500 9.500 M7.500 10.500 V12.500' fill='none' stroke='#1c1c50' strokeWidth='1.500' />
                            </svg>
                        </button>
                    </BrowserHead>
                    <BrowserTools>
                        <button aria-label='Filter'><Icon name='funnel' /></button>
                        <button aria-label='Suchen'><Icon name='binoculars' /></button>
                    </BrowserTools>
                    <TreeBox>
                        <Row $root><Icon name='part' /><NodeLabel>E00084803.ipt</NodeLabel></Row>
                        <Branch $indent={4}>
                            {tree.map(node => <TreeNode key={node.label} node={node} />)}
                        </Branch>
                    </TreeBox>
                </Browser>
                <Canvas><Model /></Canvas>
            </Workspace>
        </Frame>
    </Desktop>
);

export default App;
